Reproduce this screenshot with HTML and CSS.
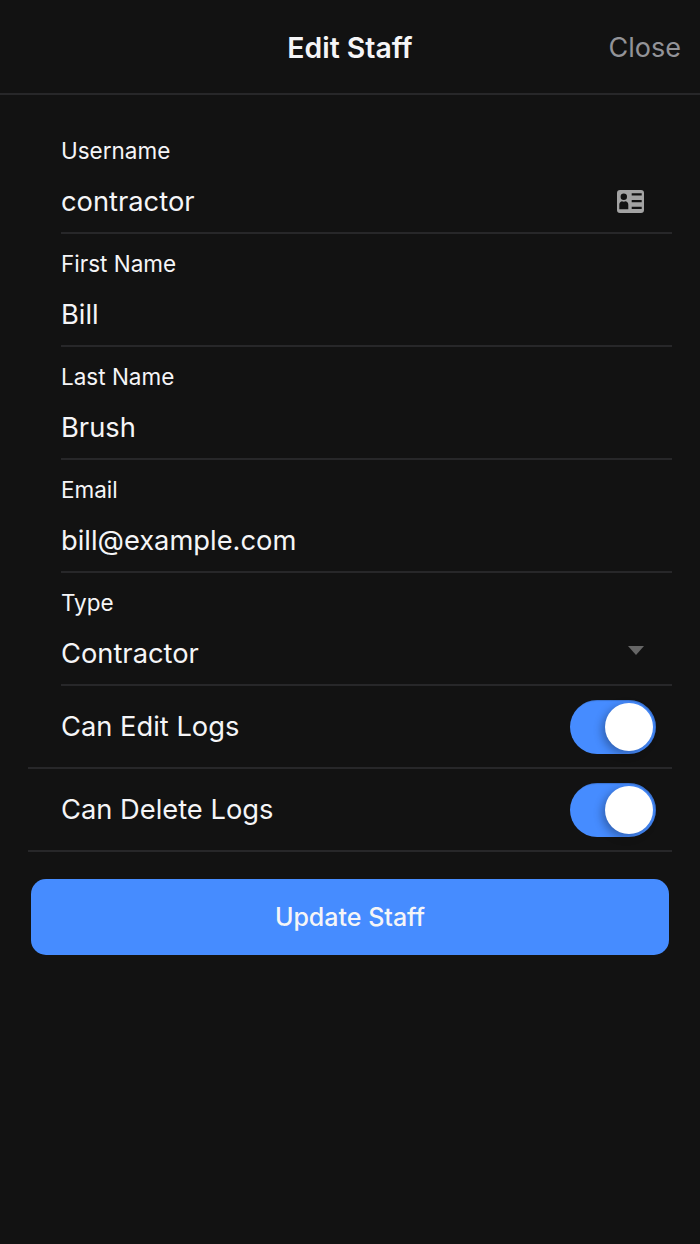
FILE: index.html
```html
<!DOCTYPE html>
<html lang="en">
<head>
<meta charset="utf-8">
<title>Edit Staff</title>
<link rel="stylesheet" href="styles.css">
</head>
<body>
<div class="screen">
  <header class="header">
    <h1 class="title">Edit Staff</h1>
    <button class="close">Close</button>
  </header>
  <form class="form">
    <div class="field">
      <div class="label">Username</div>
      <div class="value-row"><span class="value">contractor</span>
        <svg class="card-icon" width="27" height="23" viewBox="0 0 27 23"><path fill="#a3a3a3" fill-rule="evenodd" d="M3 0h21a3 3 0 0 1 3 3v17a3 3 0 0 1-3 3H3a3 3 0 0 1-3-3V3a3 3 0 0 1 3-3zM6.800 3.600a3.200 3.200 0 1 0 0 6.400a3.200 3.200 0 0 0 0-6.400zM2.300 19.300h9v-4.500c0-1.700-1-3-2.600-3.500c-.6.300-1.200.4-1.900.4s-1.300-.1-1.900-.4c-1.600.5-2.600 1.800-2.600 3.500zM14.700 3.300v2.200h10V3.300zM14.700 10v2.200h10V10zM14.700 16.700v2.200h10v-2.200z"/></svg>
      </div>
    </div>
    <div class="field">
      <div class="label">First Name</div>
      <div class="value-row"><span class="value">Bill</span></div>
    </div>
    <div class="field">
      <div class="label">Last Name</div>
      <div class="value-row"><span class="value">Brush</span></div>
    </div>
    <div class="field">
      <div class="label">Email</div>
      <div class="value-row"><span class="value">bill@example.com</span></div>
    </div>
    <div class="field">
      <div class="label">Type</div>
      <div class="value-row"><span class="value">Contractor</span><span class="caret"></span></div>
    </div>
    <div class="toggle-row">
      <span class="value">Can Edit Logs</span>
      <span class="switch"><span class="knob"></span></span>
    </div>
    <div class="toggle-row">
      <span class="value">Can Delete Logs</span>
      <span class="switch"><span class="knob"></span></span>
    </div>
    <button class="submit" type="button">Update Staff</button>
  </form>
</div>
</body>
</html>
```
FILE: styles.css
```css
* { box-sizing: border-box; }
html, body { margin: 0; padding: 0; }
body {
  background: #121212;
  color: #f5f5f7;
  font-family: Inter, "Liberation Sans", sans-serif;
}
.screen { width: 700px; height: 1244px; overflow: hidden; }
.header {
  height: 95px;
  display: flex;
  align-items: center;
  justify-content: center;
  border-bottom: 2px solid #272729;
  position: relative;
  padding-top: 2px;
}
.title { margin: 0; font-size: 28.400px; font-weight: 600; color: #f5f5f7; }
.close {
  position: absolute;
  right: 19px;
  top: 31px;
  padding: 0;
  background: none;
  border: 0;
  color: #939398;
  font: 400 27px Inter, "Liberation Sans", sans-serif;
}
.form { padding: 26px 28px 0; display: flex; flex-direction: column; }
.field {
  margin-left: 33px;
  height: 113px;
  padding-top: 14px;
  border-bottom: 2px solid #272729;
}
.label { height: 32px; line-height: 32px; font-size: 22.500px; color: #f5f5f7; }
.value-row {
  height: 50px;
  margin-top: 9px;
  padding-right: 28px;
  display: flex;
  align-items: center;
  justify-content: space-between;
}
.value { font-size: 27.300px; color: #f5f5f7; }
.card-icon { display: block; }
.caret {
  width: 0;
  height: 0;
  margin-top: -5px;
  border-left: 8.500px solid transparent;
  border-right: 8.500px solid transparent;
  border-top: 9px solid #666;
}
.toggle-row {
  height: 83px;
  padding: 0 16px 0 33px;
  display: flex;
  align-items: center;
  justify-content: space-between;
  border-bottom: 2px solid #272729;
}
.switch {
  width: 86px;
  height: 54px;
  border-radius: 27px;
  background: #468cff;
  box-shadow: inset -1px 1px 1px rgba(0, 0, 0, 0.18);
  position: relative;
  display: block;
}
.knob {
  position: absolute;
  right: 3px;
  top: 3px;
  width: 48px;
  height: 48px;
  border-radius: 50%;
  background: #fff;
  box-shadow: -3px 3px 8px rgba(0, 0, 0, 0.3);
}
.submit {
  display: block;
  margin: 27px 3px 0;
  height: 76px;
  border: 0;
  border-radius: 15px;
  background: #468cff;
  color: #f5f5f7;
  font: 500 25px Inter, "Liberation Sans", sans-serif;
}
```
